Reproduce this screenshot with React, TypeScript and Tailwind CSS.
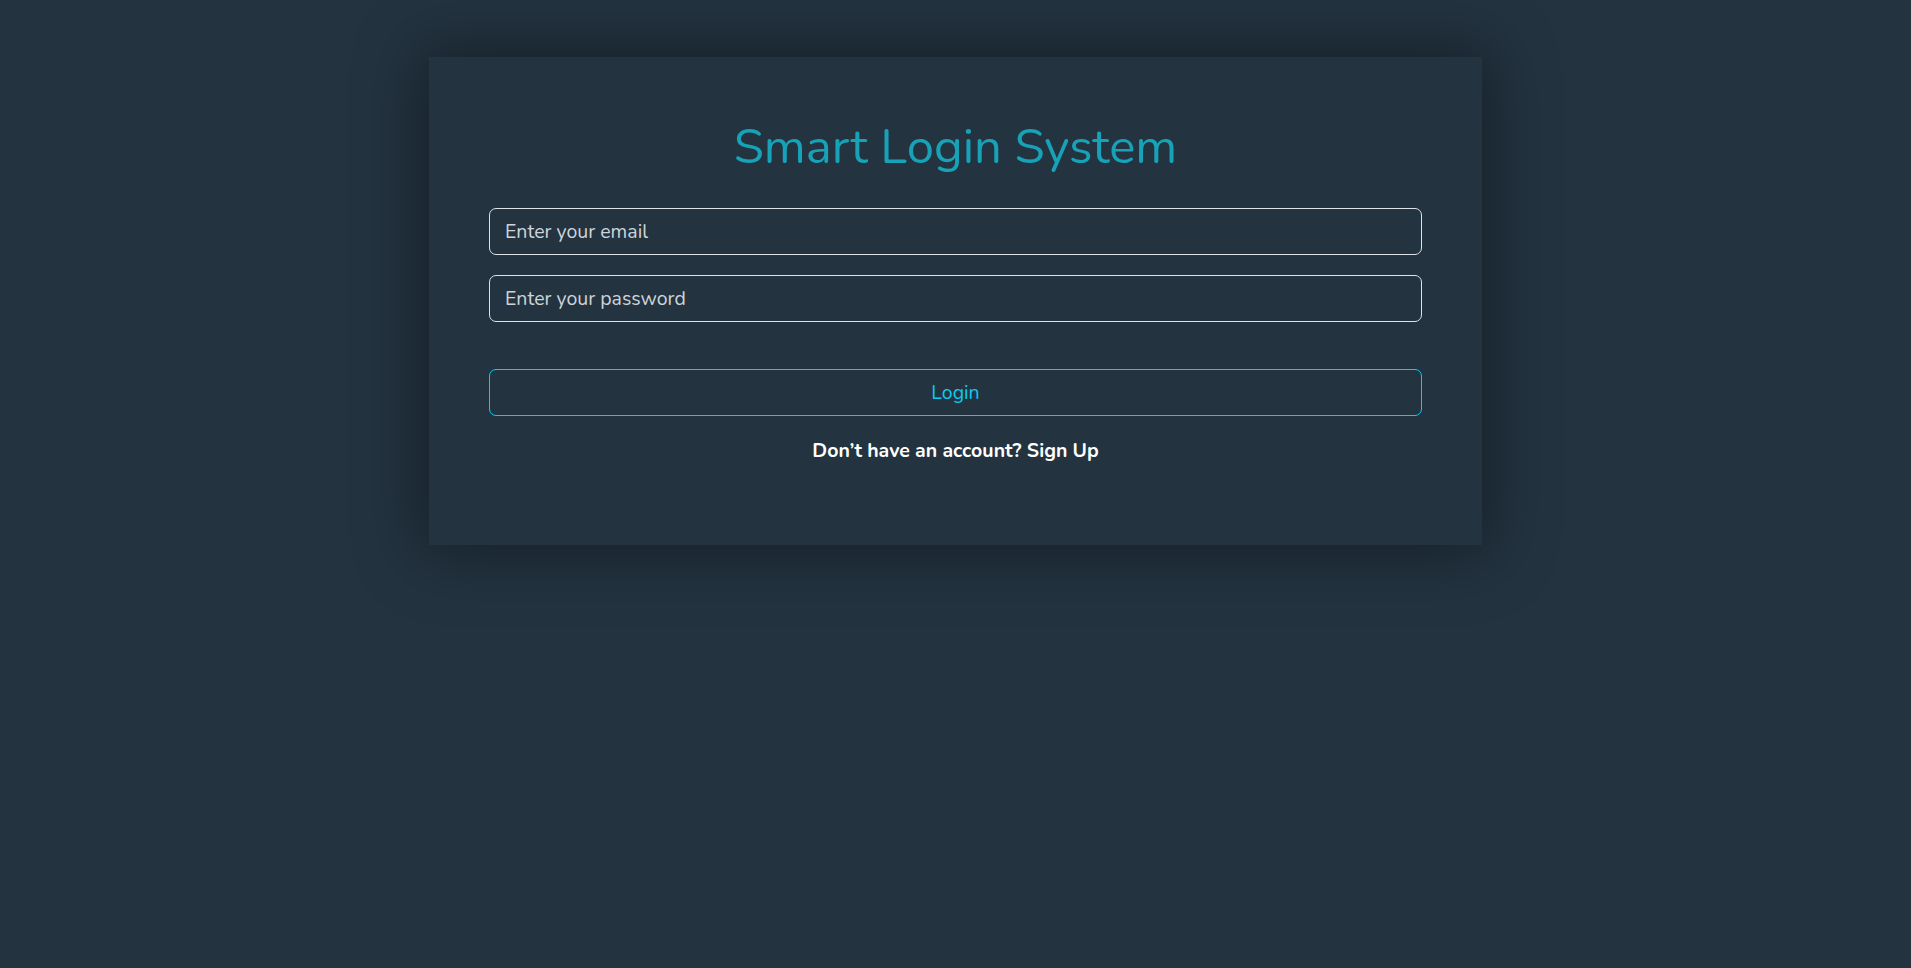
export default function App() {
  return (
    <div className="min-h-[968px] w-full bg-[#233340] pt-[57px]" style={{ fontFamily: "Nunito, Lato, 'Open Sans', sans-serif" }}>
      <div className="mx-auto w-[1053px] h-[488px] bg-[#233440] shadow-[0_0_60px_10px_rgba(0,0,0,0.35)] px-[60px] pt-[60px]">
        <h1 className="text-center text-[49px] leading-[60px] text-[#17a2b8] mb-[31px]">Smart Login System</h1>
        <input className="block w-full h-[47px] rounded-[7px] border border-[#dee2e6] bg-transparent px-[15px] text-[19.5px] text-white placeholder:text-[#ced4da] outline-none mb-[20px]" placeholder="Enter your email" />
        <input type="password" className="block w-full h-[47px] rounded-[7px] border border-[#dee2e6] bg-transparent px-[15px] text-[19.5px] text-white placeholder:text-[#ced4da] outline-none mb-[47px]" placeholder="Enter your password" />
        <button className="block w-full h-[47px] rounded-[7px] border border-[#0dcaf0] bg-transparent text-[19.5px] text-[#0dcaf0]">Login</button>
        <p className="text-center text-white font-bold text-[19.5px] mt-[20px]">Don’t have an account? Sign Up</p>
      </div>
    </div>
  );
}
